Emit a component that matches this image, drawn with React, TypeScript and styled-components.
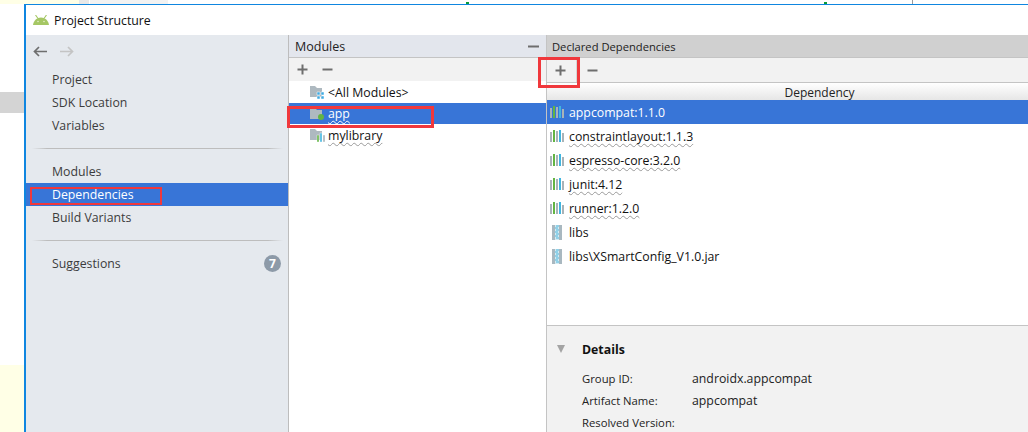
import { createGlobalStyle, styled } from 'styled-components';

const GlobalStyle = createGlobalStyle`
  html, body {
    margin: 0;
    height: 432px;
    overflow: hidden;
    background: #fff;
    font-family: "Open Sans", "Noto Sans", sans-serif;
    font-size: 12.3px;
    color: #222;
  }
`;

const Desktop = styled.div`
  position: relative;
  width: 1028px;
  height: 432px;
  overflow: hidden;
  background: #fff;
`;

const Scrap = styled.div<{ $x: number; $y: number; $w: number; $h: number; $c: string }>`
  position: absolute;
  left: ${(p) => p.$x}px;
  top: ${(p) => p.$y}px;
  width: ${(p) => p.$w}px;
  height: ${(p) => p.$h}px;
  background: ${(p) => p.$c};
`;

const Window = styled.div`
  position: absolute;
  left: 24px;
  top: 4px;
  width: 1070px;
  height: 440px;
  display: flex;
  flex-direction: column;
  box-sizing: border-box;
  border: 1px solid #0f86e0;
  border-width: 1px 1px 1px 2px;
  background: #fff;
`;

const TitleBar = styled.div`
  height: 30px;
  flex: none;
  display: flex;
  align-items: center;
  gap: 5px;
  padding-left: 7px;
  color: #111;
`;

const Body = styled.div`
  flex: 1;
  display: flex;
  min-height: 0;
`;

const Sidebar = styled.nav`
  width: 262px;
  flex: none;
  background: #e5e9ee;
  border-right: 1px solid #bdbdbd;
`;

const NavArrows = styled.div`
  height: 33px;
  display: flex;
  align-items: center;
  gap: 13px;
  padding-left: 7px;
`;

const NavItem = styled.div<{ $active?: boolean }>`
  height: 23px;
  line-height: 23px;
  padding-left: 26px;
  padding-right: 7px;
  display: flex;
  justify-content: space-between;
  align-items: center;
  color: ${(p) => (p.$active ? '#fff' : '#3c3c3c')};
  background: ${(p) => (p.$active ? '#3875d7' : 'transparent')};
`;

const NavDivider = styled.div`
  height: 1px;
  margin: 11px 5px 11px 6px;
  background: linear-gradient(90deg, #e5e9ee, #bdbdbd 6%, #bdbdbd 94%, #e5e9ee);
`;

const Badge = styled.span`
  width: 17px;
  height: 17px;
  border-radius: 50%;
  background: #8d9aa8;
  color: #fff;
  font-size: 12px;
  font-weight: 700;
  line-height: 17px;
  text-align: center;
`;

const Column = styled.section<{ $width?: number }>`
  display: flex;
  flex-direction: column;
  ${(p) => (p.$width ? `width: ${p.$width}px; flex: none;` : 'flex: 1; min-width: 0;')}
  border-right: 1px solid #c4c4c4;
  background: #fff;
`;

const ColumnHeader = styled.div<{ $selected?: boolean }>`
  height: 22px;
  flex: none;
  display: flex;
  align-items: center;
  justify-content: space-between;
  padding: ${(p) => (p.$selected ? '0 7px 0 5px' : '0 6px')};
  background: ${(p) => (p.$selected ? '#d0d0d0' : '#e3e6ed')};
  border-bottom: 1px solid #c4c4c4;
  color: #222;
  font-size: ${(p) => (p.$selected ? '11.2px' : '12.5px')};
`;

const Toolbar = styled.div`
  height: 23px;
  flex: none;
  display: flex;
  align-items: center;
  gap: 12px;
  padding-left: 7px;
  background: #f2f2f2;
`;

const DependencyToolbar = styled.div`
  height: 24px;
  flex: none;
  display: flex;
  align-items: center;
  gap: 9px;
  background: #f2f2f2;
  border-bottom: 1px solid #c4c4c4;
`;

const ToolButton = styled.div`
  width: 30px;
  height: 100%;
  box-sizing: border-box;
  display: flex;
  align-items: center;
  padding-left: 7px;
  border-right: 1px solid #d6d6d6;
`;

const ToolIcon = styled.svg`
  width: 13px;
  height: 13px;
  flex: none;
  stroke: #6e6e6e;
  stroke-width: 2;
`;

const ModuleList = styled.div`
  flex: 1;
`;

const ModuleRow = styled.div<{ $active?: boolean; $height: number }>`
  height: ${(p) => p.$height}px;
  display: flex;
  align-items: center;
  gap: 2px;
  padding-left: 21px;
  background: ${(p) => (p.$active ? '#3875d7' : 'transparent')};
  color: ${(p) => (p.$active ? '#fff' : '#111')};
`;

const Squiggle = styled.span`
  text-decoration: underline wavy #9a9a9a 1px;
  text-underline-offset: 2px;
  text-decoration-skip-ink: none;
`;

const SquiggleLight = styled(Squiggle)`
  text-decoration-color: #fff;
`;

const TableHeader = styled.div`
  height: 17px;
  flex: none;
  line-height: 19px;
  text-align: center;
  font-size: 12px;
  color: #222;
  background: linear-gradient(#fff, #e6e6e6);
`;

const DependencyList = styled.div`
  flex: 1;
`;

const DependencyRow = styled.div<{ $active?: boolean }>`
  height: 24px;
  display: flex;
  align-items: center;
  gap: 5px;
  padding-left: 3px;
  background: ${(p) => (p.$active ? '#3875d7' : 'transparent')};
  color: ${(p) => (p.$active ? '#fff' : '#111')};
`;

const DetailsPanel = styled.div`
  height: 118px;
  flex: none;
  box-sizing: border-box;
  border-top: 1px solid #c4c4c4;
  background: #f2f2f2;
  padding: 13px 0 0 10px;
`;

const DetailsTitle = styled.div`
  display: flex;
  align-items: center;
  gap: 17px;
  height: 20px;
  font-weight: 700;
  color: #111;
`;

const Triangle = styled.span`
  width: 0;
  height: 0;
  border-left: 4.5px solid transparent;
  border-right: 4.5px solid transparent;
  border-top: 8px solid #a4a4a4;
`;

const DetailGrid = styled.dl`
  margin: 8px 0 0 25px;
  display: grid;
  grid-template-columns: 110px 1fr;
  grid-auto-rows: 22px;
  align-items: center;
  color: #222;
  white-space: nowrap;
  & dt { margin: 0; font-size: 11.3px; }
  & dd { margin: 0; font-size: 12.3px; }
`;

const RedBox = styled.div<{ $x: number; $y: number; $w: number; $h: number; $thin?: boolean }>`
  position: absolute;
  left: ${(p) => p.$x}px;
  top: ${(p) => p.$y}px;
  width: ${(p) => p.$w}px;
  height: ${(p) => p.$h}px;
  box-sizing: border-box;
  border: ${(p) => (p.$thin ? 2 : 3)}px solid #f0383c;
`;

const AndroidHead = () => (
  <svg width="16" height="10" viewBox="0 0 16 10">
    <path d="M0 10 C0.5 5.5 4 2.5 8 2.5 C12 2.5 15.5 5.5 16 10 Z" fill="#a5c764" />
    <path d="M2.5 0 L5 3.5 M13.5 0 L11 3.5" stroke="#a5c764" strokeWidth="1.1" />
    <circle cx="5" cy="6.5" r="0.8" fill="#e4efc9" />
    <circle cx="11" cy="6.5" r="0.8" fill="#e4efc9" />
  </svg>
);

const Arrow = ({ color, flip }: { color: string; flip?: boolean }) => (
  <svg width="14" height="11" viewBox="0 0 14 11" style={flip ? { transform: 'scaleX(-1)' } : undefined}>
    <path d="M14 5.5 H2 M6 1 L1.5 5.5 L6 10" fill="none" stroke={color} strokeWidth="1.7" />
  </svg>
);

const Plus = () => (
  <ToolIcon viewBox="0 0 13 13">
    <path d="M1.5 6.5 H11.5 M6.5 1.5 V11.5" />
  </ToolIcon>
);

const Minus = () => (
  <ToolIcon viewBox="0 0 13 13">
    <path d="M1.5 6.5 H11.5" />
  </ToolIcon>
);

const Folder = ({ children }: { children?: React.ReactNode }) => (
  <svg width="16" height="16" viewBox="0 0 16 16" style={{ flex: 'none' }}>
    <path d="M0 2 H5 L7 4 H12 V13 H0 Z" fill="#aeb9c0" />
    {children}
  </svg>
);

const LibBars = () => (
  <svg width="14" height="12" viewBox="0 0 14 12" style={{ flex: 'none' }}>
    <rect x="0" y="2" width="2" height="10" fill="#a9b3b8" />
    <rect x="3" y="0" width="2" height="12" fill="#62b543" />
    <rect x="6" y="1" width="2" height="11" fill="#a9b3b8" />
    <rect x="9" y="0" width="2" height="12" fill="#40b6e0" />
    <rect x="12" y="3" width="2" height="9" fill="#a9b3b8" />
  </svg>
);

const JarIcon = () => (
  <svg width="10" height="15" viewBox="0 0 10 15" style={{ flex: 'none', margin: '0 2px' }}>
    <rect x="0" y="0" width="10" height="15" fill="#a9b8c0" />
    <rect x="3" y="0" width="4" height="15" fill="#d4ebf3" />
    <path d="M4 1 H7 M3 3 H6 M4 5 H7 M3 7 H6 M4 9 H7 M3 11 H6 M4 13 H7" stroke="#4fb6dc" strokeWidth="1" />
  </svg>
);

const navTop = ['Project', 'SDK Location', 'Variables'];
const deps = [
  { name: 'appcompat:1.1.0', active: true },
  { name: 'constraintlayout:1.1.3' },
  { name: 'espresso-core:3.2.0' },
  { name: 'junit:4.12' },
  { name: 'runner:1.2.0' },
];

export default function App() {
  return (
    <Desktop>
      <GlobalStyle />
      <Scrap $x={0} $y={0} $w={79} $h={4} $c="#ffffe6" />
      <Scrap $x={79} $y={0} $w={10} $h={4} $c="#e8e8e8" />
      <Scrap $x={90} $y={0} $w={78} $h={4} $c="#f2f2f2" />
      <Scrap $x={0} $y={92} $w={24} $h={21} $c="#d4d4d4" />
      <Scrap $x={0} $y={365} $w={24} $h={67} $c="#ffffe6" />
      <Scrap $x={466} $y={2} $w={3} $h={2} $c="#0a9a3a" />
      <Scrap $x={824} $y={2} $w={3} $h={2} $c="#0a9a3a" />
      <Scrap $x={912} $y={0} $w={1} $h={4} $c="#9a9a9a" />
      <Window>
        <TitleBar>
          <AndroidHead />
          Project Structure
        </TitleBar>
        <Body>
          <Sidebar>
            <NavArrows>
              <Arrow color="#6e6e6e" />
              <Arrow color="#c4c4c4" flip />
            </NavArrows>
            {navTop.map((n) => (
              <NavItem key={n}>{n}</NavItem>
            ))}
            <NavDivider />
            <NavItem>Modules</NavItem>
            <NavItem $active>Dependencies</NavItem>
            <NavItem>Build Variants</NavItem>
            <NavDivider />
            <NavItem>
              Suggestions
              <Badge>7</Badge>
            </NavItem>
          </Sidebar>
          <Column $width={257}>
            <ColumnHeader>
              Modules
              <ToolIcon viewBox="0 0 13 13">
                <path d="M1 6.5 H12" />
              </ToolIcon>
            </ColumnHeader>
            <Toolbar>
              <Plus />
              <Minus />
            </Toolbar>
            <ModuleList>
              <ModuleRow $height={22}>
                <Folder>
                  <path d="M7 8 H10 V11 H7 Z M11 8 H14 V11 H11 Z M7 12 H10 V15 H7 Z M11 12 H14 V15 H11 Z" fill="#40a9e0" stroke="#fff" strokeWidth="0.5" />
                </Folder>
                {'<All Modules>'}
              </ModuleRow>
              <ModuleRow $height={21} $active>
                <Folder>
                  <circle cx="11" cy="11" r="3" fill="#62b543" />
                </Folder>
                <SquiggleLight>app</SquiggleLight>
              </ModuleRow>
              <ModuleRow $height={22}>
                <Folder>
                  <rect x="7" y="8" width="2" height="7" fill="#62b543" stroke="#fff" strokeWidth="0.4" />
                  <rect x="10" y="6" width="2" height="9" fill="#40b6e0" stroke="#fff" strokeWidth="0.4" />
                  <rect x="13" y="8" width="2" height="7" fill="#a9b3b8" stroke="#fff" strokeWidth="0.4" />
                </Folder>
                <Squiggle>mylibrary</Squiggle>
              </ModuleRow>
            </ModuleList>
          </Column>
          <Column>
            <ColumnHeader $selected>Declared Dependencies</ColumnHeader>
            <DependencyToolbar>
              <ToolButton>
                <Plus />
              </ToolButton>
              <Minus />
            </DependencyToolbar>
            <TableHeader>Dependency</TableHeader>
            <DependencyList>
              {deps.map((d) => (
                <DependencyRow key={d.name} $active={d.active}>
                  <LibBars />
                  {d.active ? d.name : <Squiggle>{d.name}</Squiggle>}
                </DependencyRow>
              ))}
              <DependencyRow>
                <JarIcon />
                libs
              </DependencyRow>
              <DependencyRow>
                <JarIcon />
                {'libs\\XSmartConfig_V1.0.jar'}
              </DependencyRow>
            </DependencyList>
            <DetailsPanel>
              <DetailsTitle>
                <Triangle />
                Details
              </DetailsTitle>
              <DetailGrid>
                <dt>Group ID:</dt>
                <dd>androidx.appcompat</dd>
                <dt>Artifact Name:</dt>
                <dd>appcompat</dd>
                <dt>Resolved Version:</dt>
                <dd />
              </DetailGrid>
            </DetailsPanel>
          </Column>
        </Body>
      </Window>
      <RedBox $x={30} $y={187} $w={132} $h={18} $thin />
      <RedBox $x={287} $y={106} $w={147} $h={22} />
      <RedBox $x={538} $y={57} $w={42} $h={31} />
    </Desktop>
  );
}
